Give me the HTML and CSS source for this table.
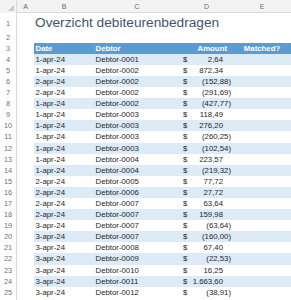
FILE: index.html
```html
<!DOCTYPE html>
<html>
<head>
<meta charset="utf-8">
<link rel="stylesheet" href="styles.css">
</head>
<body>
<div class="sheet">
  <div class="row colhead">
    <div class="corner"><span class="tri"></span></div>
    <div class="cl">A</div><div class="cl">B</div><div class="cl">C</div><div class="cl">D</div><div class="cl">E</div>
  </div>
  <div class="row r1">
    <div class="rn">1</div><div></div>
    <div class="title">Overzicht debiteurenbedragen</div><div></div><div></div><div></div>
  </div>
  <div class="row">
    <div class="rn">2</div><div></div><div></div><div></div><div></div><div></div>
  </div>
  <div class="row">
    <div class="rn">3</div><div></div>
    <div class="th">Date</div><div class="th">Debtor</div><div class="th amt-h">Amount</div><div class="th mat-h">Matched?</div>
  </div>
  <div class="row band"><div class="rn">4</div><div></div><div class="c">1-apr-24</div><div class="c">Debtor-0001</div><div class="c amt"><span>$</span><span class="pos">2,64</span></div><div class="c"></div></div>
  <div class="row"><div class="rn">5</div><div></div><div class="c">1-apr-24</div><div class="c">Debtor-0002</div><div class="c amt"><span>$</span><span class="pos">872,34</span></div><div class="c"></div></div>
  <div class="row band"><div class="rn">6</div><div></div><div class="c">2-apr-24</div><div class="c">Debtor-0002</div><div class="c amt"><span>$</span><span class="neg">(152,88)</span></div><div class="c"></div></div>
  <div class="row"><div class="rn">7</div><div></div><div class="c">2-apr-24</div><div class="c">Debtor-0002</div><div class="c amt"><span>$</span><span class="neg">(291,69)</span></div><div class="c"></div></div>
  <div class="row band"><div class="rn">8</div><div></div><div class="c">1-apr-24</div><div class="c">Debtor-0002</div><div class="c amt"><span>$</span><span class="neg">(427,77)</span></div><div class="c"></div></div>
  <div class="row"><div class="rn">9</div><div></div><div class="c">1-apr-24</div><div class="c">Debtor-0003</div><div class="c amt"><span>$</span><span class="pos">118,49</span></div><div class="c"></div></div>
  <div class="row band"><div class="rn">10</div><div></div><div class="c">1-apr-24</div><div class="c">Debtor-0003</div><div class="c amt"><span>$</span><span class="pos">276,20</span></div><div class="c"></div></div>
  <div class="row"><div class="rn">11</div><div></div><div class="c">1-apr-24</div><div class="c">Debtor-0003</div><div class="c amt"><span>$</span><span class="neg">(260,25)</span></div><div class="c"></div></div>
  <div class="row band"><div class="rn">12</div><div></div><div class="c">1-apr-24</div><div class="c">Debtor-0003</div><div class="c amt"><span>$</span><span class="neg">(102,54)</span></div><div class="c"></div></div>
  <div class="row"><div class="rn">13</div><div></div><div class="c">1-apr-24</div><div class="c">Debtor-0004</div><div class="c amt"><span>$</span><span class="pos">223,57</span></div><div class="c"></div></div>
  <div class="row band"><div class="rn">14</div><div></div><div class="c">1-apr-24</div><div class="c">Debtor-0004</div><div class="c amt"><span>$</span><span class="neg">(219,32)</span></div><div class="c"></div></div>
  <div class="row"><div class="rn">15</div><div></div><div class="c">2-apr-24</div><div class="c">Debtor-0005</div><div class="c amt"><span>$</span><span class="pos">77,72</span></div><div class="c"></div></div>
  <div class="row band"><div class="rn">16</div><div></div><div class="c">2-apr-24</div><div class="c">Debtor-0006</div><div class="c amt"><span>$</span><span class="pos">27,72</span></div><div class="c"></div></div>
  <div class="row"><div class="rn">17</div><div></div><div class="c">2-apr-24</div><div class="c">Debtor-0007</div><div class="c amt"><span>$</span><span class="pos">63,64</span></div><div class="c"></div></div>
  <div class="row band"><div class="rn">18</div><div></div><div class="c">2-apr-24</div><div class="c">Debtor-0007</div><div class="c amt"><span>$</span><span class="pos">159,98</span></div><div class="c"></div></div>
  <div class="row"><div class="rn">19</div><div></div><div class="c">3-apr-24</div><div class="c">Debtor-0007</div><div class="c amt"><span>$</span><span class="neg">(63,64)</span></div><div class="c"></div></div>
  <div class="row band"><div class="rn">20</div><div></div><div class="c">3-apr-24</div><div class="c">Debtor-0007</div><div class="c amt"><span>$</span><span class="neg">(160,00)</span></div><div class="c"></div></div>
  <div class="row"><div class="rn">21</div><div></div><div class="c">3-apr-24</div><div class="c">Debtor-0008</div><div class="c amt"><span>$</span><span class="pos">67,40</span></div><div class="c"></div></div>
  <div class="row band"><div class="rn">22</div><div></div><div class="c">3-apr-24</div><div class="c">Debtor-0009</div><div class="c amt"><span>$</span><span class="neg">(22,53)</span></div><div class="c"></div></div>
  <div class="row"><div class="rn">23</div><div></div><div class="c">3-apr-24</div><div class="c">Debtor-0010</div><div class="c amt"><span>$</span><span class="pos">16,25</span></div><div class="c"></div></div>
  <div class="row band"><div class="rn">24</div><div></div><div class="c">3-apr-24</div><div class="c">Debtor-0011</div><div class="c amt"><span>$</span><span class="pos">1.663,60</span></div><div class="c"></div></div>
  <div class="row"><div class="rn">25</div><div></div><div class="c">3-apr-24</div><div class="c">Debtor-0012</div><div class="c amt"><span>$</span><span class="neg">(38,91)</span></div><div class="c"></div></div>
  <div class="row"><div class="rn"></div><div></div><div></div><div></div><div></div><div></div></div>
</div>
</body>
</html>
```
FILE: styles.css
```css
html, body {
  margin: 0;
  padding: 0;
  background: #ffffff;
}
body {
  font-family: "Liberation Sans", Arial, sans-serif;
  font-size: 7.8px;
  color: #1f1f1f;
  overflow: hidden;
  width: 291px;
  height: 300px;
}
.sheet {
  display: flex;
  flex-direction: column;
  width: 291px;
}
.row {
  display: grid;
  grid-template-columns: 17px 17px 60px 86px 53px 58px;
  height: 11.1px;
  line-height: 11.1px;
}
.row > div {
  overflow: visible;
  white-space: nowrap;
}
.colhead {
  height: 13px;
  line-height: 13px;
  background: #f3f3f3;
  border-bottom: 1px solid #dadada;
  box-sizing: border-box;
}
.colhead .cl {
  text-align: center;
  color: #6a6a6a;
  font-size: 7px;
}
.corner {
  position: relative;
  background: #f3f3f3;
  border-right: 1px solid #dadada;
}
.tri {
  position: absolute;
  right: 2px;
  bottom: 2px;
  width: 0;
  height: 0;
  border-left: 6px solid transparent;
  border-bottom: 6px solid #c8c8c8;
}
.rn {
  text-align: center;
  color: #707070;
  font-size: 7.4px;
  background: #ffffff;
  border-right: 1px solid #dadada;
}
.r1 {
  height: 18.6px;
  line-height: 18.6px;
}
.r1 .rn {
  line-height: 22px;
}
.title {
  font-size: 13.7px;
  color: #44546a;
  padding-left: 1px;
  line-height: 20px;
}
.th {
  background: #5b9bd5;
  color: #ffffff;
  font-weight: bold;
  padding-left: 1.5px;
  line-height: 11.6px;
}
.amt-h {
  text-align: right;
  padding-right: 6px;
}
.mat-h {
  text-align: center;
  padding-left: 0;
}
.c {
  padding-left: 1.5px;
}
.band .c {
  background: #ddebf7;
}
.amt {
  display: flex;
  justify-content: space-between;
  padding-left: 3px;
}
.amt .pos {
  padding-right: 10px;
}
.amt .neg {
  padding-right: 2px;
}
```
